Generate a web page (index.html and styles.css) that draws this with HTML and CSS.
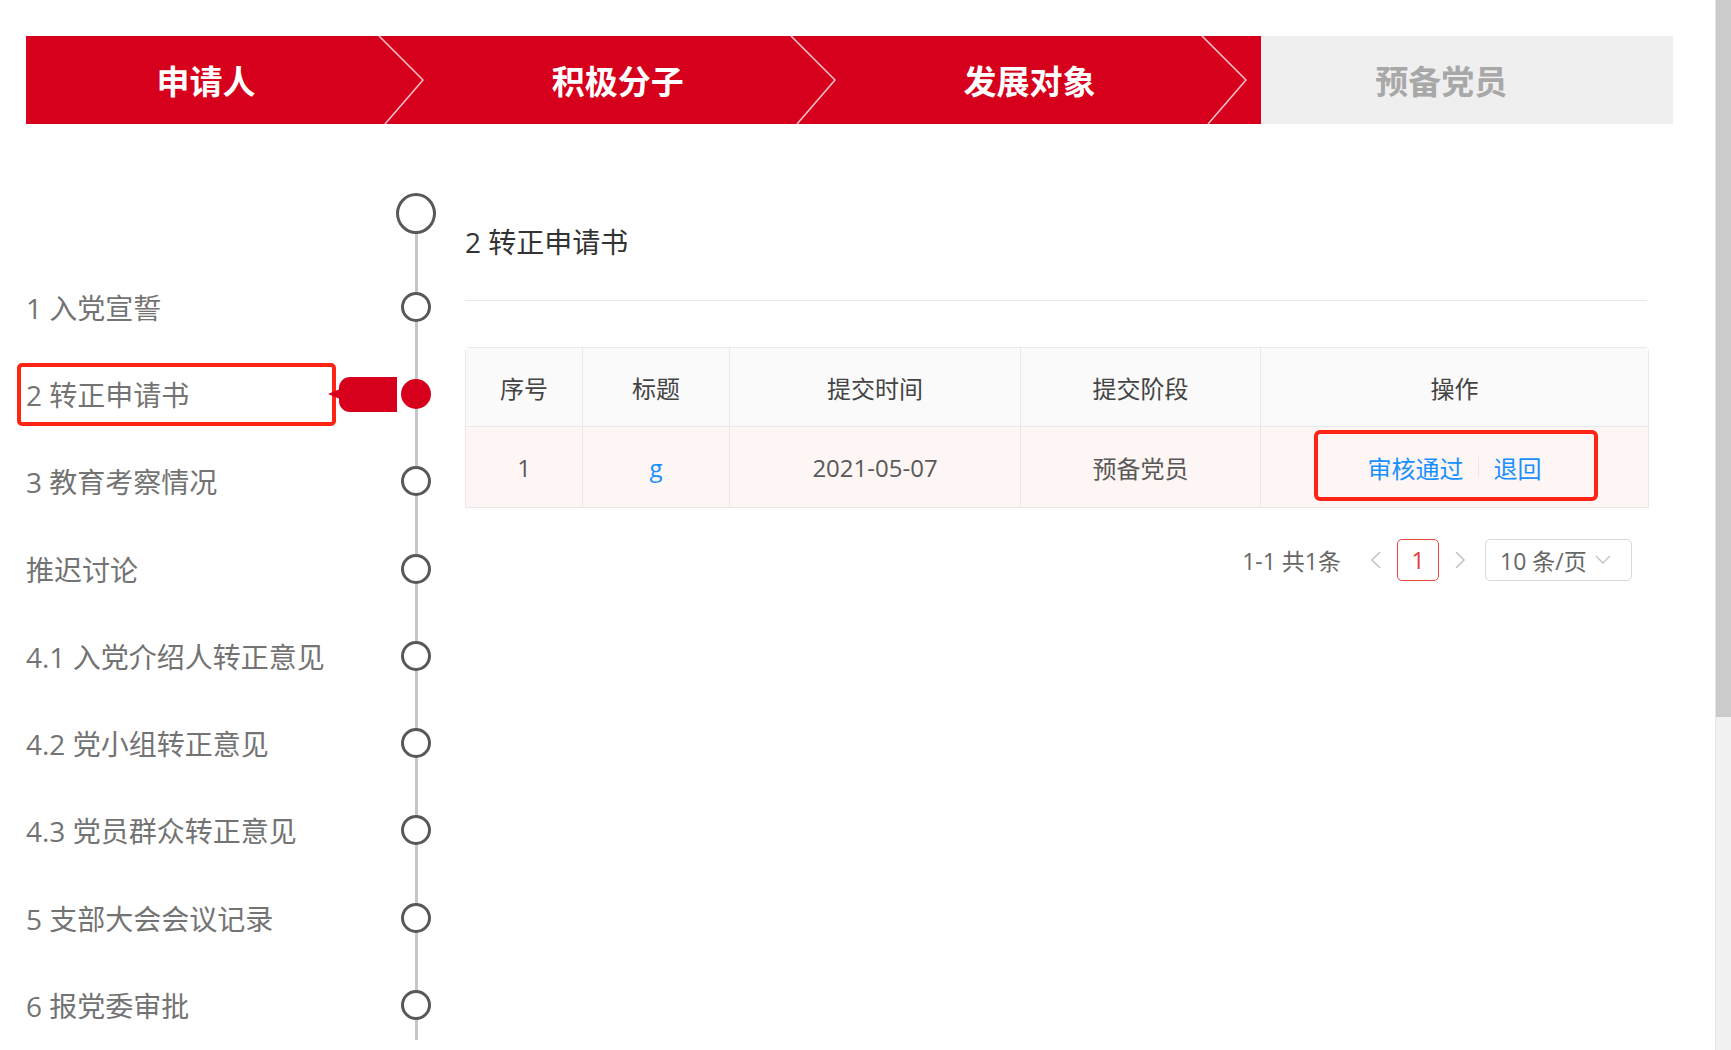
FILE: index.html
```html
<!DOCTYPE html>
<html lang="zh-CN">
<head>
<meta charset="utf-8">
<title>转正申请书</title>
<link rel="stylesheet" href="styles.css">
</head>
<body>
<div class="frame">
  <div class="page">
    <div class="steps">
      <div class="step done"><span class="step-text">申请人</span>
        <svg class="chev" width="50" height="88" viewBox="0 0 50 88"><polyline points="1,0 45,44 7,88" fill="none" stroke="rgba(255,255,255,0.75)" stroke-width="1.6" stroke-linejoin="round"/></svg>
      </div>
      <div class="step done"><span class="step-text">积极分子</span>
        <svg class="chev" width="50" height="88" viewBox="0 0 50 88"><polyline points="1,0 45,44 7,88" fill="none" stroke="rgba(255,255,255,0.75)" stroke-width="1.6" stroke-linejoin="round"/></svg>
      </div>
      <div class="step done"><span class="step-text">发展对象</span>
        <svg class="chev" width="50" height="88" viewBox="0 0 50 88"><polyline points="1,0 45,44 7,88" fill="none" stroke="rgba(255,255,255,0.75)" stroke-width="1.6" stroke-linejoin="round"/></svg>
      </div>
      <div class="step todo"><span class="step-text">预备党员</span></div>
    </div>

    <div class="main">
      <div class="timeline">
        <div class="tl-start"><div class="node"><span class="dot big"></span></div></div>
        <div class="tl-row"><span class="tl-label">1 入党宣誓</span><div class="node"><span class="dot"></span></div></div>
        <div class="tl-row active">
          <span class="tl-label">2 转正申请书</span>
          <span class="annot-left"></span>
          <span class="tag"></span>
          <div class="node"><span class="dot filled"></span></div>
        </div>
        <div class="tl-row"><span class="tl-label">3 教育考察情况</span><div class="node"><span class="dot"></span></div></div>
        <div class="tl-row"><span class="tl-label">推迟讨论</span><div class="node"><span class="dot"></span></div></div>
        <div class="tl-row"><span class="tl-label">4.1 入党介绍人转正意见</span><div class="node"><span class="dot"></span></div></div>
        <div class="tl-row"><span class="tl-label">4.2 党小组转正意见</span><div class="node"><span class="dot"></span></div></div>
        <div class="tl-row"><span class="tl-label">4.3 党员群众转正意见</span><div class="node"><span class="dot"></span></div></div>
        <div class="tl-row"><span class="tl-label">5 支部大会会议记录</span><div class="node"><span class="dot"></span></div></div>
        <div class="tl-row"><span class="tl-label">6 报党委审批</span><div class="node"><span class="dot"></span></div></div>
      </div>

      <div class="content">
        <div class="title">2 转正申请书</div>
        <table class="grid">
          <colgroup>
            <col class="c1"><col class="c2"><col class="c3"><col class="c4"><col class="c5">
          </colgroup>
          <thead>
            <tr><th>序号</th><th>标题</th><th>提交时间</th><th>提交阶段</th><th>操作</th></tr>
          </thead>
          <tbody>
            <tr>
              <td>1</td>
              <td><a class="link">g</a></td>
              <td>2021-05-07</td>
              <td>预备党员</td>
              <td class="ops">
                <span class="ops-inner"><a class="link">审核通过</a><span class="sep"></span><a class="link">退回</a></span>
                <span class="annot-right"></span>
              </td>
            </tr>
          </tbody>
        </table>
        <div class="pager">
          <span class="total">1-1 共1条</span>
          <span class="pg-btn"><svg width="12" height="20" viewBox="0 0 12 20"><polyline points="10,2 2,10 10,18" fill="none" stroke="#c4c4c4" stroke-width="1.6"/></svg></span>
          <span class="pg-item">1</span>
          <span class="pg-btn"><svg width="12" height="20" viewBox="0 0 12 20"><polyline points="2,2 10,10 2,18" fill="none" stroke="#c4c4c4" stroke-width="1.6"/></svg></span>
          <span class="pg-size">10 条/页<svg width="16" height="10" viewBox="0 0 16 10"><polyline points="1,1 8,8 15,1" fill="none" stroke="#c4c4c4" stroke-width="1.4"/></svg></span>
        </div>
      </div>
    </div>
  </div>
  <div class="scrollbar"><div class="thumb"></div></div>
</div>
</body>
</html>
```

FILE: styles.css
```css
html, body {
  margin: 0;
  padding: 0;
  height: 1050px;
  overflow: hidden;
  background: #fff;
}
body {
  font-family: "Open Sans", "Noto Sans CJK SC", sans-serif;
  color: #666;
}
.frame {
  display: flex;
  height: 1050px;
}
.page {
  flex: 1;
  padding: 36px 42px 0 26px;
  min-width: 0;
}
.scrollbar {
  width: 15px;
  background: #f1f1f1;
  border-left: 1px solid #e6e6e6;
  display: flex;
  flex-direction: column;
}
.thumb {
  height: 717px;
  background: #cbcbcb;
}

/* Steps */
.steps {
  display: flex;
  height: 88px;
}
.step {
  flex: 1;
  position: relative;
  display: flex;
  align-items: center;
  justify-content: center;
  padding-right: 52px;
  box-sizing: border-box;
  font-family: "Noto Sans CJK SC", sans-serif;
  font-weight: 700;
  font-size: 33px;
}
.step.done {
  background: #d6001c;
  color: #fff;
}
.step.todo {
  background: #efefef;
  color: #a8a8a8;
}
.chev {
  position: absolute;
  right: 10px;
  top: 0;
}

/* Main */
.main {
  display: flex;
  margin-top: 46px;
}
.timeline {
  width: 410px;
  position: relative;
  flex-shrink: 0;
}
.timeline::before {
  content: "";
  position: absolute;
  left: 388.5px;
  width: 3px;
  top: 44px;
  bottom: 9px;
  background: #c3c6cd;
}
.tl-start {
  height: 87.25px;
  margin-bottom: 6px;
  display: flex;
  align-items: center;
  justify-content: flex-end;
}
.tl-row {
  height: 87.25px;
  display: flex;
  align-items: center;
  position: relative;
}
.tl-label {
  flex: 1;
  font-size: 28px;
  color: #737373;
  white-space: nowrap;
}
.node {
  width: 40px;
  height: 40px;
  display: flex;
  align-items: center;
  justify-content: center;
  position: relative;
  z-index: 1;
}
.dot {
  width: 30px;
  height: 30px;
  box-sizing: border-box;
  border: 3px solid #585858;
  border-radius: 50%;
  background: #fff;
}
.dot.big {
  width: 41px;
  height: 41px;
  border-width: 3.5px;
}
.dot.filled {
  border: none;
  background: #d6001c;
}
.annot-left {
  position: absolute;
  left: -9px;
  top: 12px;
  width: 319px;
  height: 63px;
  box-sizing: border-box;
  border: 4.5px solid #ff2414;
  border-radius: 5px;
}
.tag {
  position: absolute;
  left: 313px;
  top: 26px;
  width: 58px;
  height: 35px;
  background: #d6001c;
  border-radius: 11px 0 0 11px;
}
.tag::before {
  content: "";
  position: absolute;
  left: -11px;
  top: 12px;
  border-right: 12px solid #d6001c;
  border-top: 5.5px solid transparent;
  border-bottom: 5.5px solid transparent;
}

/* Content */
.content {
  flex: 1;
  margin-left: 29px;
  margin-right: 26px;
  min-width: 0;
}
.title {
  margin-top: 52px;
  height: 40px;
  line-height: 40px;
  font-size: 28px;
  color: #333;
  padding-bottom: 38px;
  border-bottom: 1.5px solid #e8e8e8;
}
.grid {
  margin-top: 46px;
  width: 1182px;
  border-collapse: separate;
  border-spacing: 0;
  table-layout: fixed;
  font-size: 24px;
  border: 1px solid #e8e8e8;
  border-radius: 4px 4px 0 0;
}
.c1 { width: 117px; }
.c2 { width: 147px; }
.c3 { width: 291px; }
.c4 { width: 240px; }
.c5 { width: 387px; }
.grid th, .grid td {
  text-align: center;
  padding: 0;
  border-right: 1px solid #e8e8e8;
}
.grid th:last-child, .grid td:last-child {
  border-right: none;
}
.grid th {
  height: 78px;
  background: #fafafa;
  font-weight: 400;
  color: #444;
  border-bottom: 1px solid #e8e8e8;
}
.grid td {
  height: 80px;
  background: #fdf6f4;
  color: #595959;
}
.link {
  color: #1890ff;
  text-decoration: none;
}
.ops {
  position: relative;
}
.ops-inner {
  display: inline-flex;
  align-items: center;
}
.sep {
  display: inline-block;
  width: 1px;
  height: 20px;
  background: #e8e8e8;
  margin: 0 15px 0 14px;
}
.annot-right {
  position: absolute;
  left: 53px;
  top: 3px;
  width: 284px;
  height: 71px;
  box-sizing: border-box;
  border: 4.5px solid #ff2414;
  border-radius: 6px;
}

/* Pager */
.pager {
  display: flex;
  justify-content: flex-end;
  align-items: center;
  margin-top: 31px;
  padding-right: 15px;
  font-size: 23px;
  color: #666;
}
.total {
  margin-right: 14px;
}
.pg-btn {
  width: 42px;
  height: 42px;
  display: flex;
  align-items: center;
  justify-content: center;
}
.pg-item {
  width: 42px;
  height: 42px;
  box-sizing: border-box;
  border: 1.5px solid #e4473c;
  border-radius: 5px;
  color: #e4393c;
  display: flex;
  align-items: center;
  justify-content: center;
}
.pg-size {
  margin-left: 4px;
  width: 147px;
  height: 42px;
  box-sizing: border-box;
  border: 1.5px solid #d9d9d9;
  border-radius: 5px;
  display: flex;
  align-items: center;
  padding-left: 14px;
  gap: 8px;
  color: #666;
}
```
